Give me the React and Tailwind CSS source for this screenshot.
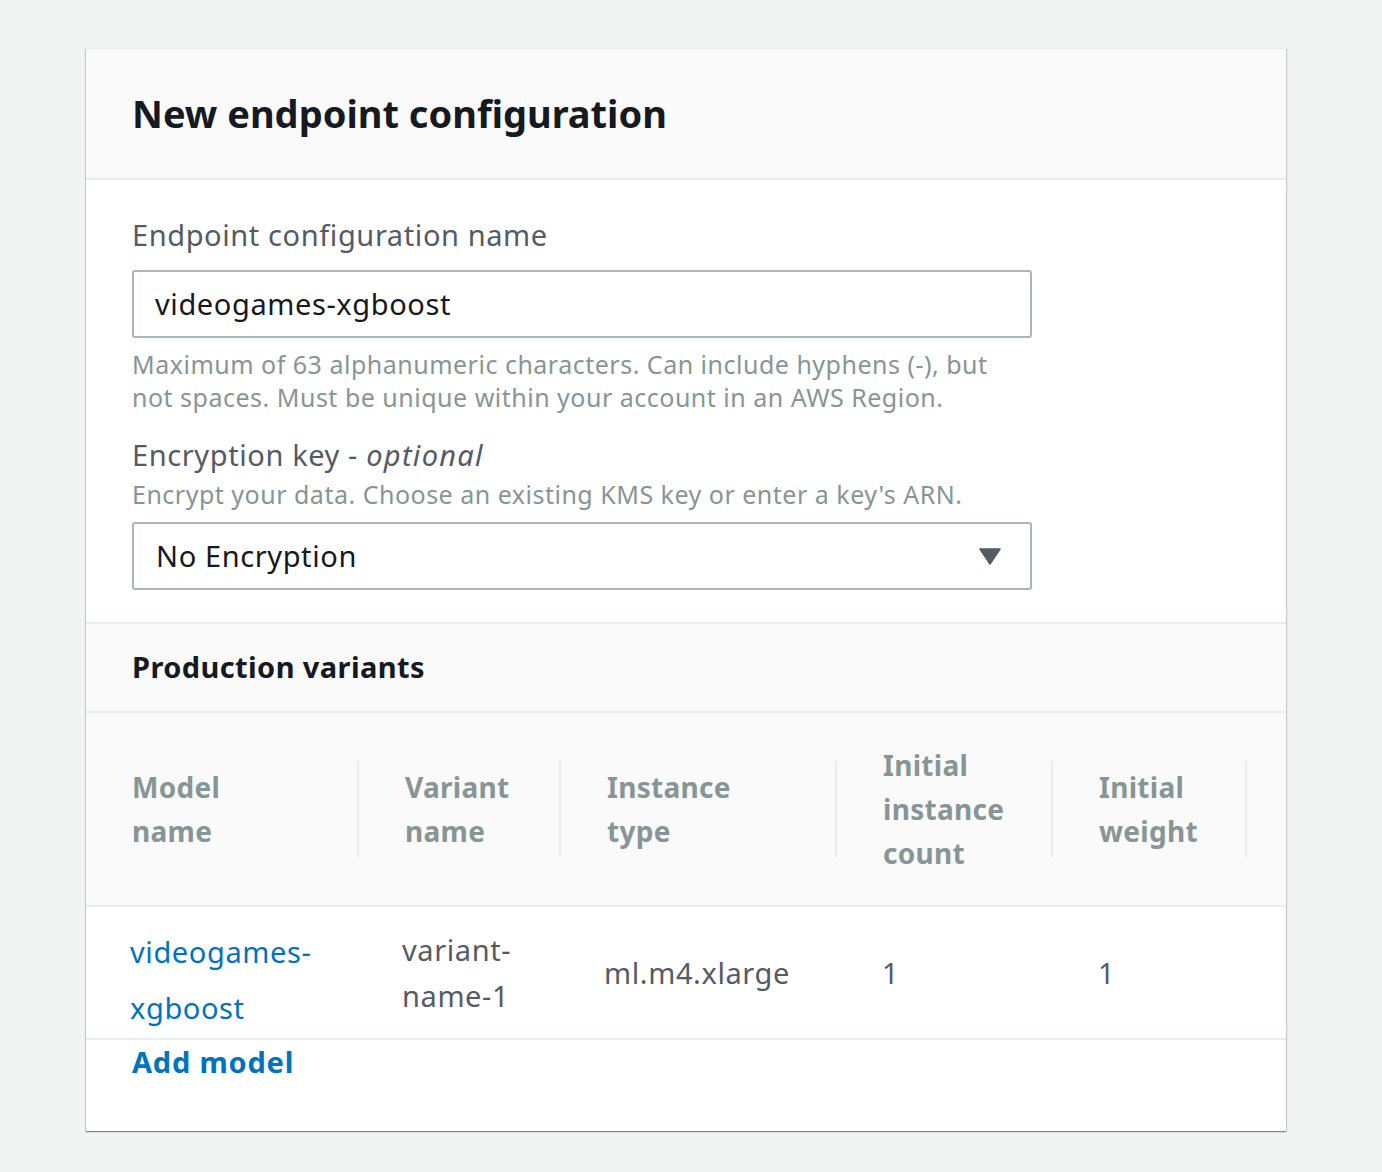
import React from 'react';

const columns = [
  { label: ['Model', 'name'], width: 'w-[273px]' },
  { label: ['Variant', 'name'], width: 'w-[202px]' },
  { label: ['Instance', 'type'], width: 'w-[276px]' },
  { label: ['Initial', 'instance', 'count'], width: 'w-[216px]' },
  { label: ['Initial', 'weight'], width: 'w-[194px]' },
];

const HeaderCell = ({ col }) => (
  <div className={`${col.width} flex items-center shrink-0`}>
    <div className="flex-1 pl-[46px] text-[28px] leading-[44px] tracking-[0.3px] font-bold text-[#879596]">
      {col.label.map((l) => (
        <div key={l}>{l}</div>
      ))}
    </div>
    <div className="w-[2px] h-[96px] bg-[#eaeded]" />
  </div>
);

const App = () => {
  return (
    <div className="min-h-screen bg-[#f2f3f3] pt-[48px] pb-[42px] font-['Noto_Sans','Open_Sans',sans-serif]">
      <div className="ml-[86px] w-[1200px] bg-white border-t border-[#eaeded] shadow-[0_1px_1px_0_rgba(0,28,36,0.3),1px_1px_1px_0_rgba(0,28,36,0.15),-1px_1px_1px_0_rgba(0,28,36,0.15)]">
        {/* header */}
        <div className="h-[131px] bg-[#fafafa] border-b-2 border-[#eaeded] px-[46px] flex items-center">
          <h1 className="text-[38px] font-bold text-[#16191f]">New endpoint configuration</h1>
        </div>

        {/* form */}
        <div className="px-[46px] pt-[37px] pb-[32px] tracking-[0.6px]">
          <div className="text-[29px] leading-[36px] text-[#545b64] mb-[17px]">Endpoint configuration name</div>
          <div className="w-[900px] h-[68px] border-2 border-[#aab7b8] rounded-[3px] flex items-center pl-[21px] text-[29px] text-[#16191f]">
            videogames-xgboost
          </div>
          <p className="mt-[10px] w-[900px] text-[25px] leading-[33px] tracking-[0.5px] text-[#879596]">
            Maximum of 63 alphanumeric characters. Can include hyphens (-), but not spaces. Must be unique within your account in an AWS Region.
          </p>
          <div className="mt-[23px] text-[29px] leading-[36px] text-[#545b64]">
            Encryption key - <i className="tracking-[1.3px]">optional</i>
          </div>
          <p className="mt-[5px] text-[25px] leading-[33px] tracking-[0.5px] text-[#879596]">
            Encrypt your data. Choose an existing KMS key or enter a key's ARN.
          </p>
          <div className="mt-[11px] w-[900px] h-[68px] border-2 border-[#aab7b8] rounded-[3px] flex items-center justify-between pl-[22px] pr-[29px] text-[29px] text-[#16191f]">
            <span>No Encryption</span>
            <svg width="22" height="17" viewBox="0 0 22 17">
              <path d="M1 1 L21 1 L11 16 Z" fill="#545b64" stroke="#545b64" strokeWidth="1.5" strokeLinejoin="round" />
            </svg>
          </div>
        </div>

        {/* production variants */}
        <div className="h-[91px] bg-[#fafafa] border-y-2 border-[#eaeded] px-[46px] flex items-center">
          <h2 className="text-[29px] tracking-[0.4px] font-bold text-[#16191f] -mt-[2px]">Production variants</h2>
        </div>

        <div className="h-[194px] bg-[#fafafa] border-b-2 border-[#eaeded] flex items-center">
          {columns.map((c) => (
            <HeaderCell key={c.label.join(' ')} col={c} />
          ))}
        </div>

        <div className="h-[133px] border-b-2 border-[#eaeded] flex items-center text-[29px] tracking-[0.6px] text-[#545b64]">
          <div className="w-[273px] pl-[44px] mt-[14px] leading-[56px]">
            <a href="#" className="text-[#0073bb]">videogames-<br />xgboost</a>
          </div>
          <div className="w-[202px] pl-[43px] leading-[46px]">
            variant-<br />name-1
          </div>
          <div className="w-[276px] pl-[43px]">ml.m4.xlarge</div>
          <div className="w-[216px] pl-[45px]">1</div>
          <div className="w-[194px] pl-[45px]">1</div>
        </div>

        <div className="px-[46px] pt-[4px] pb-[51px]">
          <a href="#" className="text-[29px] leading-[36px] tracking-[0.8px] font-bold text-[#0073bb]">Add model</a>
        </div>
      </div>
    </div>
  );
};

export default App;
